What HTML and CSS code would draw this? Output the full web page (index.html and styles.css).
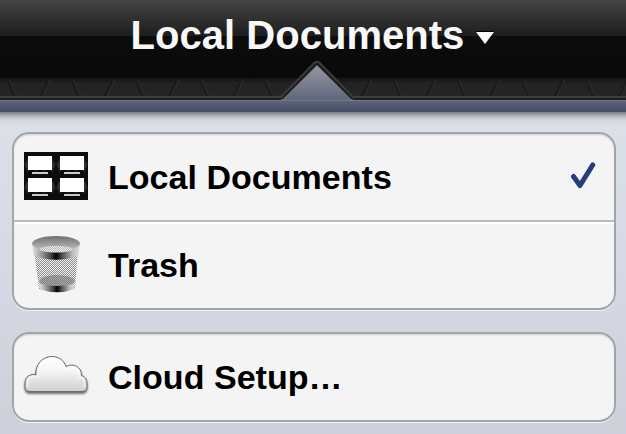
FILE: index.html
```
<!DOCTYPE html>
<html lang="en">
<head>
<meta charset="utf-8">
<title>Local Documents</title>
<link rel="stylesheet" href="styles.css">
</head>
<body>
<header class="bar">
  <h1 class="title">Local Documents</h1>
  <svg class="caret" width="18" height="13" viewBox="0 0 18 13"><path d="M0 1h18L9 13z" fill="#fafafa"/></svg>
</header>
<div class="texture">
  <svg width="626" height="22" viewBox="0 0 626 22">
    <defs>
      <pattern id="leather" width="64.3" height="22" patternUnits="userSpaceOnUse" x="7">
        <path d="M0 1C3 7 4 14 8 19M42 1C39 7 36 13 33 19" fill="none" stroke="#1a1a1a" stroke-width="2"/>
        <path d="M2 1C5 7 6 14 10 19M44 1C41 7 38 13 35 19" fill="none" stroke="#2b2b2b" stroke-width="1"/>
      </pattern>
    </defs>
    <rect width="626" height="18" fill="url(#leather)"/>
  </svg>
</div>
<svg class="pointer" width="80" height="42" viewBox="0 0 80 42">
  <defs>
    <linearGradient id="tip" x1="0" y1="0" x2="0" y2="1"><stop stop-color="#9496a2"/><stop offset="1" stop-color="#5c6378"/></linearGradient>
  </defs>
  <path d="M3 39L37 1.5Q40 -1.500 43 1.500L77 39z" fill="#1b1b1b"/>
  <path d="M0 36H4L37.500 1.800Q40 -.4 42.500 1.800L76 36H80" fill="none" stroke="#3c3b3b" stroke-width="2"/>
  <path d="M2 39.500L6 38.500 40 4.500 74 38.500 78 39.500V42H2z" fill="url(#tip)"/>
  <path d="M3 39.500L6 38.500 40 4.500 74 38.500 77 39.500" fill="none" stroke="#9b9da6" stroke-width=".6"/>
</svg>
<div class="frame"></div>
<main class="panel">
  <ul class="card">
    <li class="row">
      <svg class="icon raised" width="64" height="48" viewBox="0 0 64 48">
        <defs>
          <pattern id="argyle" width="8" height="22" patternUnits="userSpaceOnUse" y="2">
            <rect width="8" height="22" fill="#0c0c0c"/>
            <path d="M4 4L7.500 11 4 18 .5 11z" fill="#303030"/>
          </pattern>
        </defs>
        <rect width="64" height="48" fill="url(#argyle)"/>
        <path d="M4 4h24v14H4zM36 4h24v14H36zM4 26h24v14H4zM36 26h24v14H36z" fill="#fff"/>
        <path d="M8 20h16v2H8zM40 20h16v2H40zM8 42h16v2H8zM40 42h16v2H40z" fill="#c9cdc9"/>
      </svg>
      <span class="label">Local Documents</span>
      <svg class="check" width="28" height="30" viewBox="0 0 28 30"><path d="M5.500 16.500L12 25.500 24.700 5" fill="none" stroke="#263d79" stroke-width="5" stroke-linecap="round" stroke-linejoin="round"/></svg>
    </li>
    <li class="row">
      <svg class="icon" width="64" height="60" viewBox="0 0 64 60">
        <defs>
          <pattern id="mesh" width="2" height="2" patternUnits="userSpaceOnUse" shape-rendering="crispEdges"><path d="M0 0h1v1H0zM1 1h1v1H1z" fill="#8c8c8c"/></pattern>
          <linearGradient id="metal"><stop stop-color="#e4e4e4"/><stop offset=".16" stop-color="#aaa"/><stop offset=".38" stop-color="#4b4b4b"/><stop offset=".5" stop-color="#000"/><stop offset=".64" stop-color="#555"/><stop offset=".86" stop-color="#c2c2c2"/><stop offset="1" stop-color="#ddd"/></linearGradient>
          <linearGradient id="lid" x1="0" y1="0" x2="0" y2="1"><stop stop-color="#707070"/><stop offset=".5" stop-color="#999"/><stop offset="1" stop-color="#c8c8c8"/></linearGradient>
        </defs>
        <path d="M8.500 12L15 54Q33 58 51 54L55.500 12z" fill="#f2f2f2"/>
        <path d="M10 14L15 54Q33 58 51 54L54 14z" fill="url(#mesh)"/>
        <ellipse cx="33" cy="46" rx="17.500" ry="6" fill="#777" opacity=".6"/>
        <path d="M15 48.500Q33 53.500 51 48.500L50 54.500Q33 60 16 54.500z" fill="url(#metal)"/>
        <path d="M8 9L9.500 20.500Q32 29 54.500 20.500L56 9z" fill="url(#metal)"/>
        <ellipse cx="32" cy="8.500" rx="24" ry="7.500" fill="url(#lid)"/>
        <ellipse cx="32" cy="14.300" rx="16.500" ry="3.200" fill="#f0f0f0"/>
        <ellipse cx="32" cy="14.300" rx="16.500" ry="3.200" fill="url(#mesh)" opacity=".6"/>
      </svg>
      <span class="label">Trash</span>
    </li>
  </ul>
  <ul class="card">
    <li class="row">
      <svg class="icon raised" width="64" height="48" viewBox="0 0 64 48">
        <defs><linearGradient id="cloud" x1="0" y1="0" x2="0" y2="1"><stop stop-color="#fff"/><stop offset=".4" stop-color="#f5f5f5"/><stop offset="1" stop-color="#cfcfcf"/></linearGradient></defs>
        <path class="cloud" d="M6 39.500Q1 39.500 1 34.500V31Q1 24 8 22.500Q10 22 12 22.800C11 13 18 4.500 28 4.500C35 4.500 40 8.500 42 14.500C49 10.500 58 15 57.500 23.500C61 24.500 63 27 63 31V34.500Q63 39.500 58 39.500z" fill="url(#cloud)" stroke="#6a6a6a" stroke-width="1"/>
        <path d="M3.500 35V31Q4 25.500 9 24.800L14 25.500C12.500 15 19 6.500 28 6.500C34 6.500 39 10 40.500 17C48 12.500 56 17 55 25Q60.500 26 60.500 32V35" fill="none" stroke="#fff" stroke-opacity=".55" stroke-width="1.500"/>
      </svg>
      <span class="label">Cloud Setup…</span>
    </li>
  </ul>
</main>
</body>
</html>
```
FILE: styles.css
```
* { box-sizing: border-box; }
body {
  margin: 0;
  height: 434px;
  overflow: hidden;
  position: relative;
  display: flex;
  flex-direction: column;
  font-family: "Liberation Sans", Arial, sans-serif;
  font-weight: bold;
  background: #d5d9e2;
}
.bar {
  height: 78px;
  flex: none;
  display: flex;
  padding: 12px 0 0 130.5px;
  background: linear-gradient(#444 0, #1d1d1d 36px, #0c0c0c 36px, #090909 78px);
}
.title {
  margin: 0;
  font-size: 40px;
  line-height: 46px;
  white-space: nowrap;
  letter-spacing: 0.03px;
  color: #f8f8f8;
}
.caret { margin: 19px 0 0 12px; filter: drop-shadow(0 -1px 0 #000); }
.texture {
  height: 22px;
  flex: none;
  overflow: hidden;
  background: linear-gradient(#161616 0, #181818 2px, #222 5px, #262626 18px, #454545 18px, #353535 20px, #222 20px, #1b1b1b 22px);
}
.texture svg { display: block; }
.pointer { position: absolute; left: 277px; top: 61px; overflow: visible; }
.frame {
  height: 12px;
  flex: none;
  background: linear-gradient(#80838d 0, #5c6378 1.5px, #454d65 12px);
}
.pointer + .frame { position: relative; }
.panel {
  flex: 1;
  display: flex;
  flex-direction: column;
  gap: 22px;
  padding: 20px 10px 0 12px;
  background: linear-gradient(#777b84 0, #96999f 2px, #bcc0c8 5px, #d5d9e2 9px, #dbdfe7 14px, #d7dae4 45%, #cdd0d9 100%);
}
.card {
  list-style: none;
  margin: 0;
  padding: 0;
  border: 2px solid #a3a5ab;
  border-radius: 17px;
  background: #f4f4f4;
  box-shadow: 0 2px 0 -1px #f0f1f4, 0 1px 0 #eceef2, inset 0 2px 2px -1px #ccc;
}
.row {
  height: 86px;
  display: flex;
  align-items: center;
  padding: 0 18px 0 10px;
}
.row + .row {
  height: 88px;
  border-top: 2px solid #bcbcbc;
  box-shadow: inset 0 2px 0 #fff;
}
.icon { margin-right: 20px; flex: none; overflow: visible; }
.raised { margin-bottom: 2px; }
.label { font-size: 34px; line-height: 40px; letter-spacing: 0.03px; color: #000; white-space: nowrap; }
.check { margin-left: auto; margin-top: -4px; }
.cloud { filter: drop-shadow(0 2px 1px rgba(0, 0, 0, .55)); }
```
